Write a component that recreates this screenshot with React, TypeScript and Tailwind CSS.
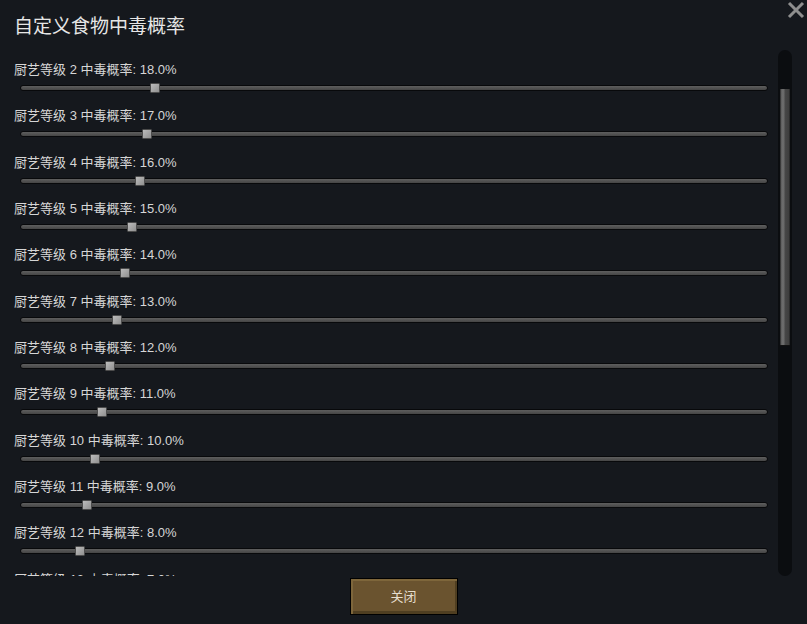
import React from 'react';

const font = { fontFamily: '"Liberation Sans", "Noto Sans CJK SC", sans-serif' };

// the view is scrolled: levels 0 and 1 sit above it, 13 is cut off at the bottom
const levels = Array.from({ length: 12 }, (_, i) => ({ level: i + 2, rate: 18 - i }));

function Slider({ value }: { value: number }) {
  return (
    <div className="relative ml-[6px] mr-[10px] mt-[4px] h-[10px]">
      <div className="absolute left-0 right-0 top-[2px] h-[6px] rounded-full border border-[#08090b] bg-[linear-gradient(180deg,#5e5e5e,#454545)]" />
      <div
        className="absolute top-0 h-[10px] w-[10px] rounded-[1px] border border-[#4c4c4c] bg-[linear-gradient(135deg,#bcbcbc,#909090)]"
        style={{ left: `${value * 7.48 - 5}px` }}
      />
    </div>
  );
}

function Row({ level, rate }: { level: number; rate: number }) {
  return (
    <div className="flex h-[46.33px] shrink-0 flex-col">
      <div className="h-[18px] text-[13px] leading-[18px] text-[#d6d6d6] whitespace-nowrap">
        厨艺等级 {level} 中毒概率: {rate.toFixed(1)}%
      </div>
      <Slider value={rate} />
    </div>
  );
}

function Scrollbar() {
  return (
    <div className="h-[526px] w-[14px] shrink-0 rounded-full bg-[#0b0d10] px-[2px] pt-[39px]">
      <div className="h-[257px] border-b border-[#111] bg-[linear-gradient(90deg,#262626_0%,#6c6c6c_18%,#6a6a6a_40%,#474747_50%,#3f3f3f_85%,#232323_100%)]" />
    </div>
  );
}

export default function App() {
  return (
    <div className="relative flex h-[624px] w-[807px] flex-col bg-[#15181d] pl-[14px] pt-[14px]" style={font}>
      <h1 className="h-[26px] text-[19px] leading-[26px] text-[#e6e6e6]">自定义食物中毒概率</h1>

      <button className="absolute right-[2px] top-[1px] text-[#8e8e8e]">
        <svg width="18" height="18" viewBox="0 0 18 18">
          <path d="M2 2 L16 16 M16 2 L2 16" stroke="currentColor" strokeWidth="3" />
        </svg>
      </button>

      <div className="mt-[10px] flex h-[526px] w-[778px]">
        <div className="flex h-[526px] w-[764px] flex-col overflow-hidden pt-[11px]">
          {levels.map(l => (
            <Row key={l.level} level={l.level} rate={l.rate} />
          ))}
        </div>
        <Scrollbar />
      </div>

      <div className="mt-[2px] flex justify-center pr-[14px]">
        <button className="h-[37px] w-[108px] border border-black bg-[#6a532f] text-[13px] text-[#e6dece] shadow-[inset_2px_2px_0_#7e663b,inset_-2px_-3px_0_#4f3e21]">
          关闭
        </button>
      </div>
    </div>
  );
}
